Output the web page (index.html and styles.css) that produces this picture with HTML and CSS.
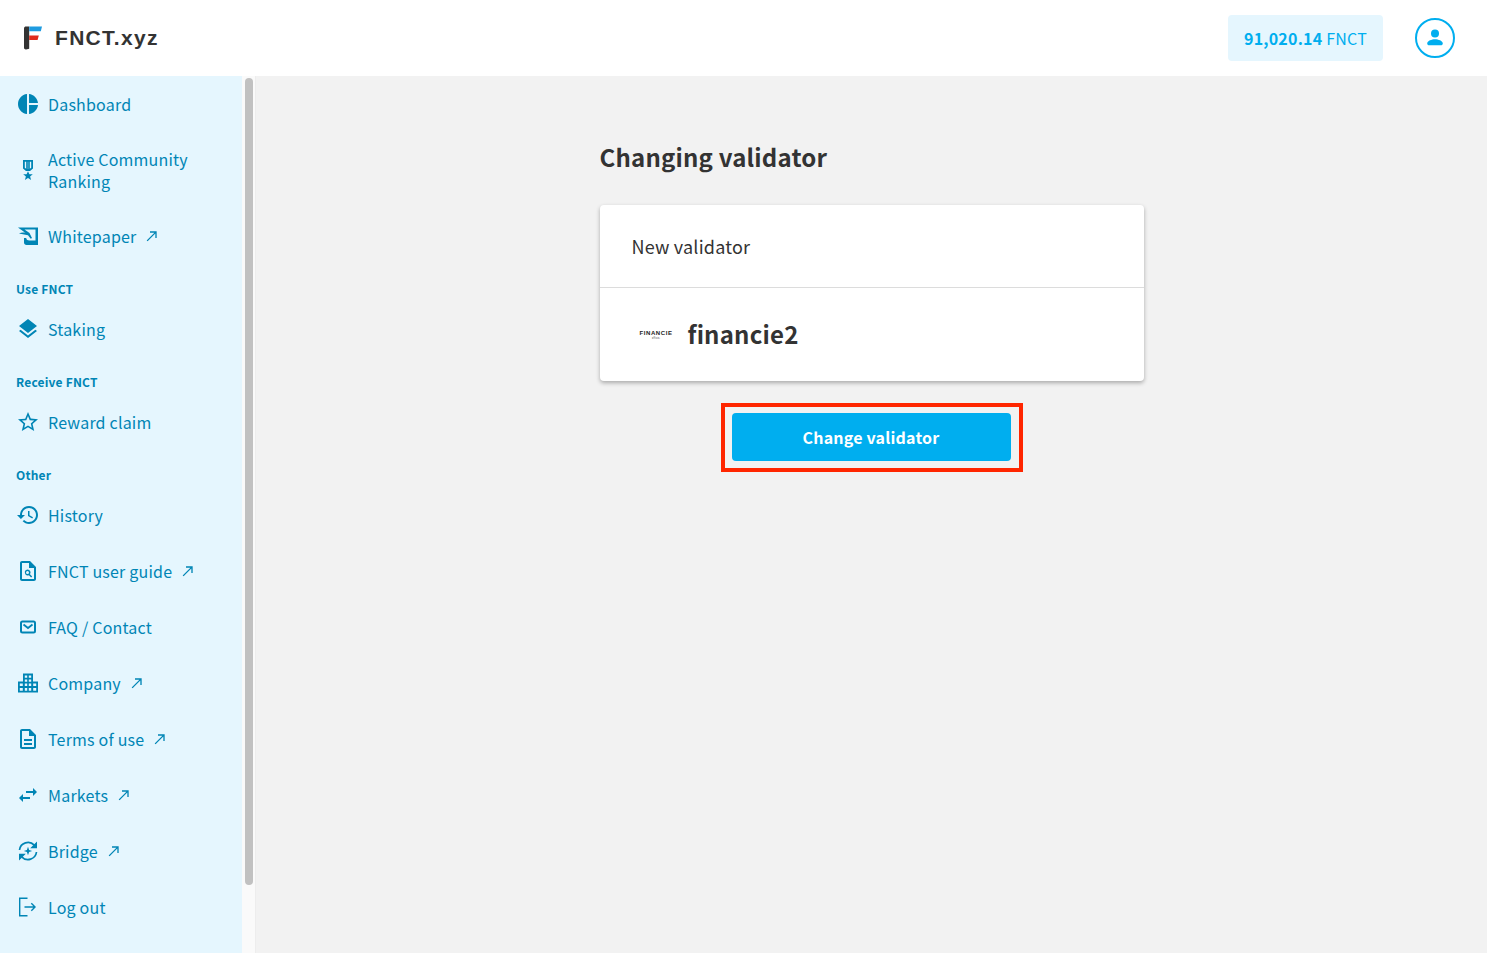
FILE: index.html
```html
<!DOCTYPE html>
<html lang="en">
<head>
  <meta charset="UTF-8">
  <title>FNCT.xyz</title>
  <link rel="stylesheet" href="styles.css">
</head>
<body>
  <header class="topbar">
    <div class="brand">
      <svg class="brand-mark" viewBox="0 0 18 24" width="18" height="24">
        <path fill="#333" d="M0 2.500C0 1.200 1 .6 2 .6h3.200v22.200L2 23.400c-1 .1-2-.6-2-1.600z"/>
        <path fill="#1e9be0" d="M5.200.6H18l-1.200 4.600H5.200z"/>
        <path fill="#e02a1c" d="M5.200 9.600h9.600l-1.200 4.400H5.200z"/>
      </svg>
      <span class="brand-name">FNCT.xyz</span>
    </div>
    <div class="topbar-right">
      <div class="balance"><b>91,020.14</b> FNCT</div>
      <div class="avatar">
        <svg viewBox="0 0 24 24" width="24" height="24">
          <circle cx="12" cy="7.600" r="4" fill="#00aeef"/>
          <path fill="#00aeef" d="M4.200 17.400c0-2.600 4.600-4.200 7.800-4.200s7.800 1.600 7.800 4.200c0 1.100-.8 1.800-1.900 1.800H6.100c-1.100 0-1.900-.7-1.900-1.800z"/>
        </svg>
      </div>
    </div>
  </header>

  <div class="layout">
    <nav class="sidebar">
      <a class="nav-item">
        <svg class="nav-icon" viewBox="0 0 24 24"><path d="M11 2v20c-5.070-.5-9-4.790-9-10s3.930-9.500 9-10zm2.030 0v8.990H22c-.47-4.740-4.240-8.520-8.970-8.990zm0 11.010V22c4.740-.47 8.500-4.250 8.970-8.990h-8.970z"/></svg>
        <span>Dashboard</span>
      </a>
      <a class="nav-item">
        <svg class="nav-icon" viewBox="0 0 24 24"><path fill-rule="evenodd" d="M7 2h10v8.500L14 13h-4l-3-2.500zm1.800 1.700v6l1.400 1.100V3.700zm3.200 0h-.2v7.300h.4V3.700zm1.800 0v7.100l1.400-1.100v-6z"/><path d="M12 13.200l1.400 3.100h3.400l-2.700 2.200 1 3.500-3.100-1.900-3.100 1.900 1-3.500-2.700-2.200h3.400z"/></svg>
        <span>Active Community<br>Ranking</span>
      </a>
      <a class="nav-item">
        <svg class="nav-icon" viewBox="0 0 24 24"><path d="M2 3.500h20V21H10.500C9 21 8 20 8 18.500V14h2.200c.4 1.800 1.300 2.500 3 2.500H19.500V5.500H8.500l5 3.500 2.500 5-1.300.8-2.700-3.500L3 9.500c2-1 4.500-1.100 6.500-.6C7 7 4 5 2 3.500z"/></svg>
        <span>Whitepaper</span>
        <svg class="ext-icon" viewBox="0 0 24 24"><path d="M9 5v2h6.590L4 18.590 5.410 20 17 8.410V15h2V5z"/></svg>
      </a>

      <div class="nav-label">Use FNCT</div>
      <a class="nav-item">
        <svg class="nav-icon" viewBox="0 0 24 24"><path d="M11.990 18.540l-7.370-5.730L3 14.070l9 7 9-7-1.630-1.270-7.380 5.740zM12 16l7.360-5.730L21 9l-9-7-9 7 1.630 1.270L12 16z"/></svg>
        <span>Staking</span>
      </a>

      <div class="nav-label">Receive FNCT</div>
      <a class="nav-item">
        <svg class="nav-icon" viewBox="0 0 24 24"><path d="M22 9.240l-7.190-.62L12 2 9.190 8.630 2 9.240l5.460 4.730L5.820 21 12 17.270 18.180 21l-1.630-7.030L22 9.240zM12 15.400l-3.760 2.270 1-4.280-3.320-2.880 4.380-.38L12 6.100l1.710 4.040 4.380.38-3.320 2.880 1 4.280L12 15.400z"/></svg>
        <span>Reward claim</span>
      </a>

      <div class="nav-label">Other</div>
      <a class="nav-item">
        <svg class="nav-icon" viewBox="0 0 24 24"><path d="M13 3c-4.970 0-9 4.030-9 9H1l3.890 3.890.07.14L9 12H6c0-3.870 3.130-7 7-7s7 3.130 7 7-3.130 7-7 7c-1.930 0-3.680-.79-4.940-2.060l-1.420 1.420C8.270 19.990 10.510 21 13 21c4.970 0 9-4.030 9-9s-4.030-9-9-9zm-1 5v5l4.280 2.540.72-1.210-3.500-2.080V8H12z"/></svg>
        <span>History</span>
      </a>
      <a class="nav-item">
        <svg class="nav-icon" viewBox="0 0 24 24"><path d="M14 2H6c-1.100 0-2 .9-2 2v16c0 1.100.9 2 2 2h12c1.100 0 2-.9 2-2V8l-6-6zm4 18H6V4h7v5h5v11z"/><path d="M11.500 10.500a3 3 0 0 1 2.500 4.700l2.200 2.200-1.100 1.100-2.200-2.200a3 3 0 1 1-1.400-5.800zm0 1.500a1.500 1.500 0 1 0 0 3 1.500 1.500 0 0 0 0-3z"/></svg>
        <span>FNCT user guide</span>
        <svg class="ext-icon" viewBox="0 0 24 24"><path d="M9 5v2h6.590L4 18.590 5.410 20 17 8.410V15h2V5z"/></svg>
      </a>
      <a class="nav-item">
        <svg class="nav-icon" viewBox="0 0 24 24"><rect x="5" y="6.500" width="14" height="11" rx="1.500" fill="none" stroke="currentColor" stroke-width="2"/><path fill="none" stroke="currentColor" stroke-width="1.800" d="M7.500 9.500l4.500 3.500 4.500-3.500"/></svg>
        <span>FAQ / Contact</span>
      </a>
      <a class="nav-item">
        <svg class="nav-icon" viewBox="0 0 24 24"><path fill-rule="evenodd" d="M7 2.500h10v8h5v11H2v-11h5zm1.800 2v2.200h2.400V4.500zm4 0v2.200h2.400V4.500zm-4 4v2.200h2.400V8.500zm4 0v2.200h2.400V8.500zm-9 4v2.600h3v-2.600zm5 0v2.600h2.400v-2.600zm4 0v2.600h2.400v-2.600zm4.400 0v2.600h3v-2.600zm-13.400 4.600v2.600h3v-2.600zm5 0v2.600h2.400v-2.600zm4 0v2.600h2.400v-2.600zm4.400 0v2.600h3v-2.600z"/></svg>
        <span>Company</span>
        <svg class="ext-icon" viewBox="0 0 24 24"><path d="M9 5v2h6.590L4 18.590 5.410 20 17 8.410V15h2V5z"/></svg>
      </a>
      <a class="nav-item">
        <svg class="nav-icon" viewBox="0 0 24 24"><path d="M8 16h8v2H8zm0-4h8v2H8zm6-10H6c-1.100 0-2 .9-2 2v16c0 1.100.89 2 1.990 2H18c1.100 0 2-.9 2-2V8l-6-6zm4 18H6V4h7v5h5v11z"/></svg>
        <span>Terms of use</span>
        <svg class="ext-icon" viewBox="0 0 24 24"><path d="M9 5v2h6.590L4 18.590 5.410 20 17 8.410V15h2V5z"/></svg>
      </a>
      <a class="nav-item">
        <svg class="nav-icon" viewBox="0 0 24 24"><path d="M6.990 11L3 15l3.990 4v-3H14v-2H6.990v-3zM21 9l-3.990-4v3H10v2h7.010v3L21 9z"/></svg>
        <span>Markets</span>
        <svg class="ext-icon" viewBox="0 0 24 24"><path d="M9 5v2h6.590L4 18.590 5.410 20 17 8.410V15h2V5z"/></svg>
      </a>
      <a class="nav-item">
        <svg class="nav-icon" viewBox="0 0 24 24"><path fill="none" stroke="currentColor" stroke-width="1.700" d="M3.500 11A8.600 8.600 0 0 1 18.300 6.200M20.500 13A8.600 8.600 0 0 1 5.700 17.800"/><path d="M21 2.500v6.800h-6.800zM3 21.500v-6.800h6.800z"/><path d="M12 7.800l1.100 3.100 3.100 1.100-3.100 1.100-1.100 3.100-1.100-3.100-3.100-1.100 3.100-1.100z"/></svg>
        <span>Bridge</span>
        <svg class="ext-icon" viewBox="0 0 24 24"><path d="M9 5v2h6.590L4 18.590 5.410 20 17 8.410V15h2V5z"/></svg>
      </a>
      <a class="nav-item">
        <svg class="nav-icon" viewBox="0 0 24 24"><path d="M3 2.500h8.500v1.400H4.400v16.200h7.100v1.400H3z"/><path d="M15.800 7.800l4.200 4.200-4.200 4.200-1-1 2.500-2.500H8.500v-1.400h8.800l-2.500-2.500z"/></svg>
        <span>Log out</span>
      </a>
    </nav>

    <div class="scroll-track"><div class="scroll-thumb"></div></div>

    <main class="content">
      <div class="content-inner">
        <h1 class="page-title">Changing validator</h1>
        <section class="card">
          <div class="card-head">New validator</div>
          <div class="card-body">
            <div class="validator-logo">
              <span class="logo-word">FINANCIE</span>
              <span class="logo-sub">official</span>
            </div>
            <span class="validator-name">financie2</span>
          </div>
        </section>
        <div class="action-frame">
          <button class="action-btn">Change validator</button>
        </div>
      </div>
    </main>
  </div>
</body>
</html>
```

FILE: styles.css
```css
:root {
  --nav-color: #0085b5;
  --nav-bg: #e5f6fe;
  --accent: #00aeef;
  --text: #333333;
  --font: "Noto Sans CJK JP", "Noto Sans", sans-serif;
}
* {
  margin: 0;
  padding: 0;
  box-sizing: border-box;
}
html, body {
  height: 100%;
}
body {
  display: flex;
  flex-direction: column;
  overflow: hidden;
  background: #f2f2f2;
  font-family: var(--font);
  color: var(--text);
  letter-spacing: 0.2px;
}
.topbar {
  display: flex;
  align-items: center;
  justify-content: space-between;
  height: 76px;
  flex-shrink: 0;
  padding: 0 32px 0 24px;
  background: #fff;
}
.brand {
  display: flex;
  align-items: center;
  gap: 13px;
}
.brand-mark {
  display: block;
}
.brand-name {
  font-family: "Liberation Sans", Arial, sans-serif;
  font-size: 21px;
  font-weight: 700;
  letter-spacing: 1.3px;
  color: #333;
}
.topbar-right {
  display: flex;
  align-items: center;
  gap: 32px;
}
.balance {
  display: flex;
  align-items: center;
  gap: 4px;
  height: 46px;
  padding: 0 16px;
  border-radius: 4px;
  background: var(--nav-bg);
  color: var(--accent);
  font-size: 16px;
}
.balance b {
  font-weight: 700;
}
.avatar {
  display: flex;
  align-items: center;
  justify-content: center;
  width: 40px;
  height: 40px;
  border: 2px solid var(--accent);
  border-radius: 50%;
}
.layout {
  display: flex;
  flex: 1;
  min-height: 0;
}
.sidebar {
  display: flex;
  flex-direction: column;
  width: 242px;
  flex-shrink: 0;
  background: var(--nav-bg);
  color: var(--nav-color);
}
.nav-item {
  display: flex;
  align-items: center;
  min-height: 56px;
  padding: 16px;
  font-size: 16px;
  line-height: 22px;
}
.nav-icon {
  width: 24px;
  height: 24px;
  margin-right: 8px;
  flex-shrink: 0;
  fill: currentColor;
}
.ext-icon {
  width: 16px;
  height: 16px;
  margin-left: 8px;
  fill: currentColor;
}
.nav-label {
  padding: 17px 16px 4px;
  font-size: 12px;
  line-height: 16px;
  font-weight: 700;
}
.scroll-track {
  width: 14px;
  flex-shrink: 0;
  padding: 2px 2px 68px 3px;
  background: #fafafa;
  border-right: 1px solid #ededed;
}
.scroll-thumb {
  height: 100%;
  border-radius: 4px;
  background: #c1c1c1;
}
.content {
  flex: 1;
  display: flex;
  justify-content: center;
}
.content-inner {
  display: flex;
  flex-direction: column;
  width: 544px;
  padding-top: 61px;
}
.page-title {
  font-size: 24px;
  line-height: 40px;
  font-weight: 700;
  letter-spacing: 0.2px;
  color: var(--text);
  margin-bottom: 28px;
}
.card {
  background: #fff;
  border-radius: 4px;
  box-shadow: 0 2px 4px rgba(0, 0, 0, 0.3);
}
.card-head {
  display: flex;
  align-items: center;
  height: 83px;
  padding: 0 32px;
  border-bottom: 1px solid #dcdcdc;
  font-size: 18px;
}
.card-body {
  display: flex;
  align-items: center;
  height: 93px;
  padding: 0 32px 2px 40px;
  gap: 15px;
}
.validator-logo {
  display: flex;
  flex-direction: column;
  align-items: center;
  width: 33px;
  margin-top: 2px;
  color: #222;
}
.logo-word {
  font-family: "Liberation Sans", sans-serif;
  font-size: 6px;
  line-height: 7px;
  font-weight: 700;
  letter-spacing: 0.6px;
}
.logo-sub {
  font-size: 2px;
  line-height: 3px;
}
.validator-name {
  font-size: 24px;
  font-weight: 700;
  line-height: 40px;
}
.action-frame {
  align-self: center;
  display: flex;
  margin-top: 22px;
  padding: 6px 8px 7px 7px;
  border: 4px solid #ff2600;
}
.action-btn {
  width: 279px;
  height: 48px;
  border: none;
  border-radius: 4px;
  background: var(--accent);
  color: #fff;
  font-family: var(--font);
  font-size: 16px;
  font-weight: 700;
  letter-spacing: 0.2px;
}
```
